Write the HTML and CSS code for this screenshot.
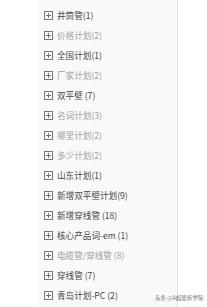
FILE: index.html
```html
<!DOCTYPE html>
<html lang="zh">
<head>
<meta charset="utf-8">
<link rel="stylesheet" href="styles.css">
</head>
<body>
<div class="page">
  <div class="gutter"></div>
  <ul class="tree">
    <li class="row"><span class="ico"></span><span class="lbl">井筒管(1)</span></li>
    <li class="row muted"><span class="ico"></span><span class="lbl">价格计划(2)</span></li>
    <li class="row"><span class="ico"></span><span class="lbl">全国计划(1)</span></li>
    <li class="row muted"><span class="ico"></span><span class="lbl">厂家计划(2)</span></li>
    <li class="row"><span class="ico"></span><span class="lbl">双平壁 (7)</span></li>
    <li class="row muted"><span class="ico"></span><span class="lbl">名词计划(3)</span></li>
    <li class="row muted"><span class="ico"></span><span class="lbl">哪里计划(2)</span></li>
    <li class="row muted"><span class="ico"></span><span class="lbl">多少计划(2)</span></li>
    <li class="row"><span class="ico"></span><span class="lbl">山东计划(1)</span></li>
    <li class="row"><span class="ico"></span><span class="lbl">新增双平壁计划(9)</span></li>
    <li class="row"><span class="ico"></span><span class="lbl">新增穿线管 (18)</span></li>
    <li class="row"><span class="ico"></span><span class="lbl">核心产品词-em (1)</span></li>
    <li class="row muted"><span class="ico"></span><span class="lbl">电缆管/穿线管 (8)</span></li>
    <li class="row"><span class="ico"></span><span class="lbl">穿线管 (7)</span></li>
    <li class="row"><span class="ico"></span><span class="lbl">青岛计划-PC (2)</span></li>
  </ul>
  <div class="rest"></div>
  <div class="mark">头条 @A超能拆学院</div>
</div>
</body>
</html>
```
FILE: styles.css
```css
html, body {
  margin: 0;
  padding: 0;
  background: #ffffff;
}
.page {
  position: relative;
  display: flex;
  width: 207px;
  height: 307px;
  overflow: hidden;
  font-family: "Noto Sans CJK SC", "Microsoft YaHei", sans-serif;
}
.gutter {
  width: 39px;
  flex: none;
}
.tree {
  list-style: none;
  margin: 0;
  padding: 5px 0 0 5px;
  width: 133px;
  flex: none;
  background: #f9f9f9;
  border-right: 1px solid #e2e2e2;
}
.rest {
  flex: 1;
}
.row {
  display: flex;
  align-items: center;
  gap: 4px;
  height: 20px;
  font-size: 8.6px;
  color: #474747;
  white-space: nowrap;
}
.row.muted {
  color: #a0a0a0;
}
.ico {
  position: relative;
  width: 7px;
  height: 7px;
  border: 1px solid #777;
  flex: none;
}
.ico::before, .ico::after {
  content: "";
  position: absolute;
  background: #777;
}
.ico::before {
  left: 1px;
  top: 3px;
  width: 5px;
  height: 1px;
}
.ico::after {
  left: 3px;
  top: 1px;
  width: 1px;
  height: 5px;
}
.mark {
  position: absolute;
  left: 155px;
  top: 294px;
  font-size: 5.5px;
  color: #777;
  white-space: nowrap;
}
```
